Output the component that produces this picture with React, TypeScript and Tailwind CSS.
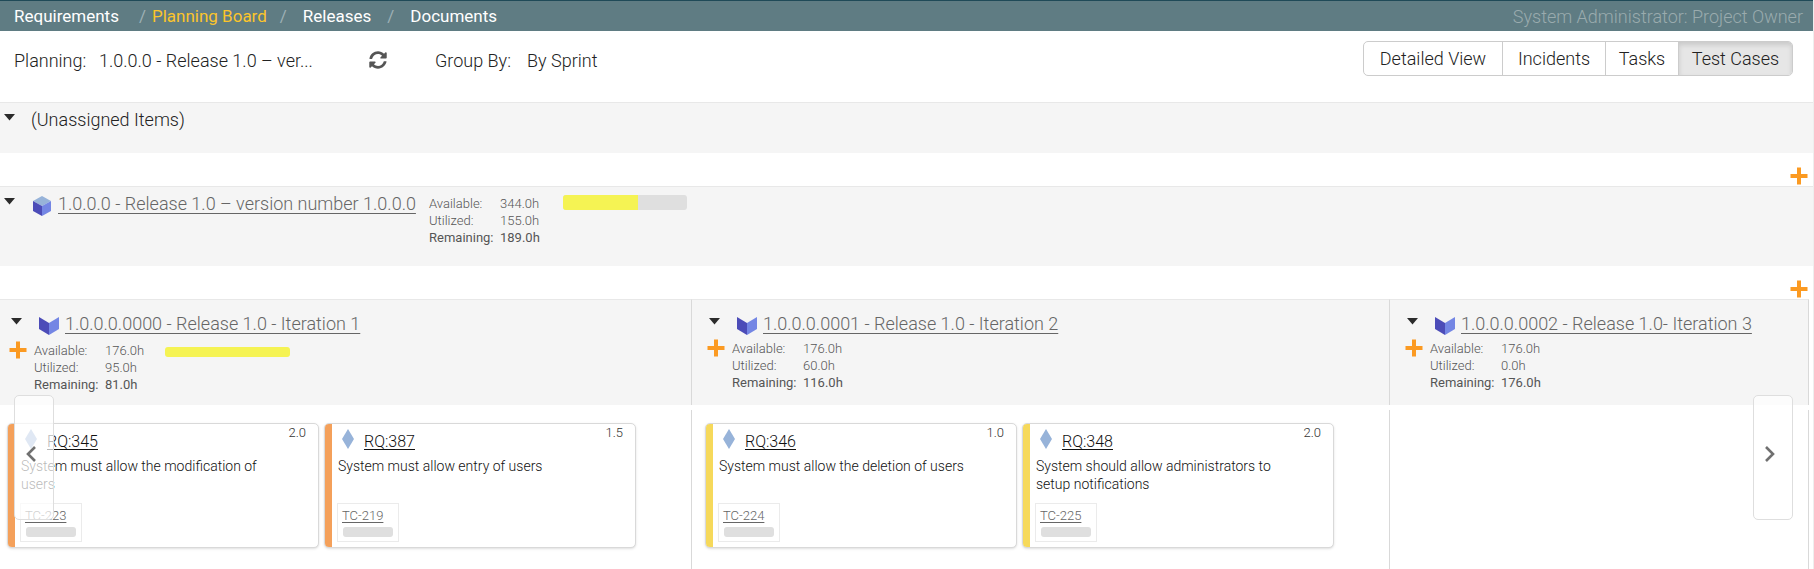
import React from "react";
import { FaSyncAlt } from "react-icons/fa";

type Stats = { available: string; utilized: string; remaining: string };
type Card = { id: string; title: string; points: string; test: string; color: string };
type Iteration = { name: string; stats: Stats; bar?: boolean; cards: Card[] };

const orange = "bg-[#f4a05a]";
const yellow = "bg-[#f6d95b]";

const iterations: Iteration[] = [
  {
    name: "1.0.0.0.0000 - Release 1.0 - Iteration 1",
    stats: { available: "176.0h", utilized: "95.0h", remaining: "81.0h" },
    bar: true,
    cards: [
      { id: "RQ:345", title: "System must allow the modification of users", points: "2.0", test: "TC-223", color: orange },
      { id: "RQ:387", title: "System must allow entry of users", points: "1.5", test: "TC-219", color: orange },
    ],
  },
  {
    name: "1.0.0.0.0001 - Release 1.0 - Iteration 2",
    stats: { available: "176.0h", utilized: "60.0h", remaining: "116.0h" },
    cards: [
      { id: "RQ:346", title: "System must allow the deletion of users", points: "1.0", test: "TC-224", color: yellow },
      { id: "RQ:348", title: "System should allow administrators to setup notifications", points: "2.0", test: "TC-225", color: yellow },
    ],
  },
  {
    name: "1.0.0.0.0002 - Release 1.0- Iteration 3",
    stats: { available: "176.0h", utilized: "0.0h", remaining: "176.0h" },
    cards: [],
  },
];

function Caret() {
  return (
    <button type="button" aria-label="Collapse" className="block shrink-0">
      <svg width="11" height="7" viewBox="0 0 11 7" fill="#2b2b2b">
        <path d="M0 0h11L5.5 6.5z" />
      </svg>
    </button>
  );
}

function AddButton() {
  return (
    <button type="button" aria-label="Add item" className="block shrink-0 text-[#fb9a22]">
      <svg width="18" height="18" viewBox="0 0 18 18" fill="currentColor">
        <path d="M7 .5h4V7h6.5v4H11v6.500H7V11H.5V7H7z" />
      </svg>
    </button>
  );
}

function ReleaseIcon() {
  return (
    <svg width="18" height="20" viewBox="0 0 18 20" className="shrink-0">
      <path d="M9 0l9 5-9 5-9-5z" fill="#97b3d9" />
      <path d="M0 5l9 5v10l-9-5z" fill="#4c4cb8" />
      <path d="M18 5l-9 5v10l9-5z" fill="#7486e4" />
    </svg>
  );
}

function IterationIcon() {
  return (
    <svg width="20" height="18" viewBox="0 0 20 18" className="shrink-0">
      <path d="M0 0l10 6v12L0 12z" fill="#4c4cb8" />
      <path d="M20 0L10 6v12l10-6z" fill="#7486e4" />
    </svg>
  );
}

function StatList({ stats }: { stats: Stats }) {
  return (
    <dl className="grid grid-cols-[71px_auto] text-[13px] leading-[17px] text-[#555]">
      <dt>Available:</dt>
      <dd>{stats.available}</dd>
      <dt>Utilized:</dt>
      <dd>{stats.utilized}</dd>
      <dt className="font-normal">Remaining:</dt>
      <dd className="font-normal">{stats.remaining}</dd>
    </dl>
  );
}

function RequirementCard({ card }: { card: Card }) {
  return (
    <article className="flex h-[125px] w-[312px] overflow-hidden rounded-[5px] border border-[#d9d9d9] bg-white shadow-sm">
      <div className={`w-[7px] shrink-0 ${card.color}`} />
      <div className="flex flex-1 flex-col items-start pb-[5px] pl-[5px]">
        <div className="flex w-full items-start pt-[5px] pl-[5px]">
          <svg width="12" height="20" viewBox="0 0 12 20" className="shrink-0">
            <path d="M6 0l6 10-6 10L0 10z" fill="#97b3d9" />
          </svg>
          <a href="#" className="mt-[3px] ml-[10px] text-[16px] leading-[20px] text-[#111] underline underline-offset-2">
            {card.id}
          </a>
          <span className="mt-[-4px] mr-[12px] ml-auto text-[13px] leading-[16px] text-[#333]">{card.points}</span>
        </div>
        <p className="mt-[5px] max-w-[250px] pl-px text-[14px] leading-[18px] text-[#111]">{card.title}</p>
        <div className="mt-auto flex h-[39px] w-[62px] flex-col border border-[#ebebeb] px-[4px] pt-[4px]">
          <a href="#" className="text-[13px] leading-[16px] text-[#666] underline underline-offset-2">
            {card.test}
          </a>
          <div className="mt-[3px] ml-px h-[10px] w-[50px] rounded-[3px] bg-[#dfdfdf]" />
        </div>
      </div>
    </article>
  );
}

function IterationColumn({ item, first }: { item: Iteration; first: boolean }) {
  return (
    <section className="flex flex-col">
      <header className={`h-[106px] border-t border-r border-t-[#e8e8e8] border-r-[#d9d9d9] bg-[#f5f5f5] ${first ? "pl-[9px]" : "pl-[15px]"}`}>
        <div className="flex items-start pt-[12px]">
          <div className="pr-[4px] pl-[2px] pt-[6px]">
            <Caret />
          </div>
          <div className="pt-[5px] pl-[13px]">
            <IterationIcon />
          </div>
          <a href="#" className="pl-[6px] text-[18px] leading-[24px] whitespace-nowrap text-[#666] underline underline-offset-3">
            {item.name}
          </a>
        </div>
        <div className={`flex items-start gap-[7px] ${first ? "pt-[5px]" : "pt-[3px]"}`}>
          <AddButton />
          <div className="pt-px">
            <StatList stats={item.stats} />
          </div>
          {item.bar && <div className="mt-[6px] ml-[14px] h-[10px] w-[125px] rounded-[3px] bg-[#f5f353]" />}
        </div>
      </header>
      <div className={`mt-[5px] flex min-h-[159px] flex-1 gap-[5px] border-r border-[#d9d9d9] pt-[13px] ${first ? "pl-[7px]" : "pl-[13px]"}`}>
        {item.cards.map((card) => (
          <RequirementCard key={card.id} card={card} />
        ))}
      </div>
    </section>
  );
}

function PageButton({ side }: { side: "left" | "right" }) {
  return (
    <button
      type="button"
      aria-label={side === "left" ? "Previous" : "Next"}
      className={`absolute top-[96px] flex h-[125px] w-[40px] items-center rounded-[5px] border border-[#dedede] bg-white/70 pb-[8px] pl-[11px] ${side === "left" ? "left-[14px]" : "right-[20px]"}`}
    >
      <svg width="10" height="16" viewBox="0 0 10 16" fill="none" stroke="#707070" strokeWidth="2.6">
        <path d={side === "left" ? "M9 1L2 8l7 7" : "M1 1l7 7-7 7"} />
      </svg>
    </button>
  );
}

export default function App() {
  return (
    <div className="border-r border-[#eee] bg-white font-['Roboto',sans-serif] font-light text-[#222]">
      <nav className="flex h-[31px] items-center border-t border-[#1f4a58] bg-[#5f7c83] pt-px pr-[10px] pl-[14px] text-[17px] font-normal text-white">
        <a href="#">Requirements</a>
        <span className="w-[33px] pl-[20px] text-[#9db0b5]">/</span>
        <a href="#" className="text-[#fcc52b]">Planning Board</a>
        <span className="w-[36px] pl-[13px] text-[#9db0b5]">/</span>
        <a href="#">Releases</a>
        <span className="w-[39px] pl-[16px] text-[#9db0b5]">/</span>
        <a href="#">Documents</a>
        <span className="ml-auto text-[18px] font-light text-[#9aabae]">System Administrator: Project Owner</span>
      </nav>

      <div className="flex h-[71px] items-start pt-[10px] pr-[20px] pl-[14px] text-[18px]">
        <div className="flex h-[38px] items-center">
          <label htmlFor="release" className="w-[85px]">Planning:</label>
          <select id="release" className="w-[252px] appearance-none bg-transparent">
            <option>1.0.0.0 - Release 1.0 – ver...</option>
          </select>
        </div>
        <button type="button" aria-label="Refresh" className="flex h-[38px] w-[84px] items-center pl-[18px] text-[#555]">
          <FaSyncAlt size={18} />
        </button>
        <div className="flex h-[38px] items-center">
          <label htmlFor="group" className="w-[92px]">Group By:</label>
          <select id="group" className="appearance-none bg-transparent">
            <option>By Sprint</option>
          </select>
        </div>
        <div className="ml-auto flex h-[35px] overflow-hidden rounded-[5px] border border-[#ccc]">
          <button type="button" className="w-[139px] border-r border-[#ccc]">Detailed View</button>
          <button type="button" className="w-[103px] border-r border-[#ccc]">Incidents</button>
          <button type="button" className="w-[73px] border-r border-[#ccc]">Tasks</button>
          <button type="button" className="w-[113px] bg-[#e6e6e6] shadow-[inset_0_3px_5px_rgba(0,0,0,0.125)]">Test Cases</button>
        </div>
      </div>

      <section className="flex h-[51px] items-start border-t border-[#e8e8e8] bg-[#f5f5f5] pt-[5px] pl-[4px]">
        <div className="pt-[6px]">
          <Caret />
        </div>
        <h2 className="pl-[16px] text-[18px] leading-[24px]">(Unassigned Items)</h2>
      </section>

      <div className="flex h-[33px] justify-end pt-[13px] pr-[5px]">
        <AddButton />
      </div>

      <section className="flex h-[80px] items-start border-t border-[#e8e8e8] bg-[#f5f5f5] pt-[5px] pl-[4px]">
        <div className="pt-[6px]">
          <Caret />
        </div>
        <div className="pt-[4px] pl-[18px]">
          <ReleaseIcon />
        </div>
        <a href="#" className="w-[378px] pl-[7px] text-[18px] leading-[24px] whitespace-nowrap text-[#666] underline underline-offset-3">
          1.0.0.0 - Release 1.0 – version number 1.0.0.0
        </a>
        <div className="pt-[3px]">
          <StatList stats={{ available: "344.0h", utilized: "155.0h", remaining: "189.0h" }} />
        </div>
        <div className="mt-[3px] ml-[23px] h-[15px] w-[124px] overflow-hidden rounded-[3px] bg-[#dfdfdf]">
          <div className="h-full w-[61%] bg-[#f5f353]" />
        </div>
      </section>

      <div className="flex h-[33px] justify-end pt-[13px] pr-[5px]">
        <AddButton />
      </div>

      <div className="relative pr-[4px]">
        <div className="grid grid-cols-[692fr_698fr_419fr]">
          {iterations.map((item, index) => (
            <IterationColumn key={item.name} item={item} first={index === 0} />
          ))}
        </div>
        <PageButton side="left" />
        <PageButton side="right" />
      </div>
    </div>
  );
}
